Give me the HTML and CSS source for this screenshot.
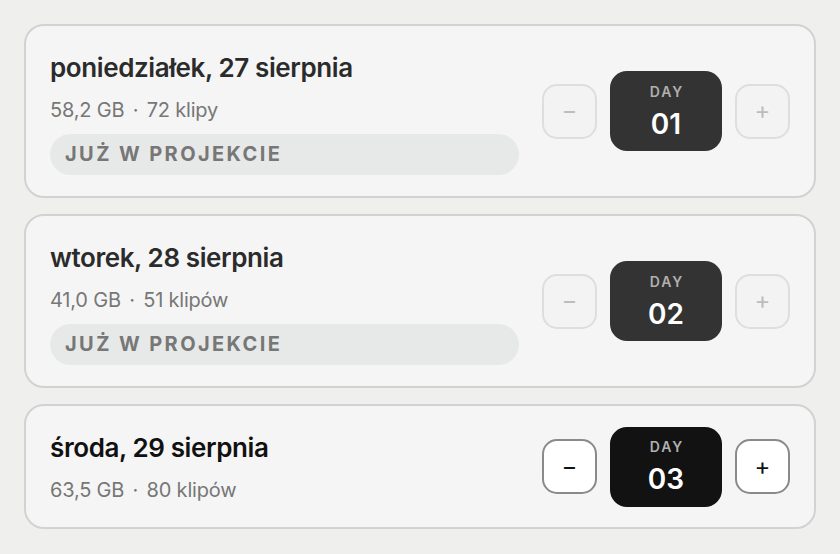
FILE: index.html
```html
<!DOCTYPE html>
<html lang="pl">
<head>
<meta charset="utf-8">
<link rel="stylesheet" href="styles.css">
</head>
<body>
<div class="list">
  <div class="card">
    <div class="info">
      <div class="title">poniedziałek, 27 sierpnia</div>
      <div class="meta">58,2 GB <span class="dot">·</span> 72 klipy</div>
      <div class="badge">JUŻ W PROJEKCIE</div>
    </div>
    <div class="controls">
      <div class="btn disabled">−</div>
      <div class="day muted"><span class="day-label">DAY</span><span class="day-num">01</span></div>
      <div class="btn disabled">+</div>
    </div>
  </div>
  <div class="card">
    <div class="info">
      <div class="title">wtorek, 28 sierpnia</div>
      <div class="meta">41,0 GB <span class="dot">·</span> 51 klipów</div>
      <div class="badge">JUŻ W PROJEKCIE</div>
    </div>
    <div class="controls">
      <div class="btn disabled">−</div>
      <div class="day muted"><span class="day-label">DAY</span><span class="day-num">02</span></div>
      <div class="btn disabled">+</div>
    </div>
  </div>
  <div class="card">
    <div class="info plain">
      <div class="title active">środa, 29 sierpnia</div>
      <div class="meta">63,5 GB <span class="dot">·</span> 80 klipów</div>
    </div>
    <div class="controls">
      <div class="btn">−</div>
      <div class="day"><span class="day-label">DAY</span><span class="day-num">03</span></div>
      <div class="btn">+</div>
    </div>
  </div>
</div>
</body>
</html>
```
FILE: styles.css
```css
* { box-sizing: border-box; }
html, body { margin: 0; padding: 0; }
body {
  background: #efefee;
  font-family: Inter, "Noto Sans", sans-serif;
  width: 840px;
  height: 554px;
}
.list {
  padding: 24px 24px 0 24px;
  display: flex;
  flex-direction: column;
  gap: 16px;
}
.card {
  background: #f5f5f5;
  border: 2px solid #d2d2d2;
  border-radius: 20px;
  display: flex;
  align-items: center;
  justify-content: space-between;
  padding: 0 24px 0 24px;
}
.info {
  padding: 26px 0 21px 0;
  width: 469px;
}
.info.plain { padding-bottom: 25px; }
.title {
  font-size: 26px;
  font-weight: 600;
  color: #2b2b2b;
  letter-spacing: -0.4px;
  line-height: 32px;
}
.title.active { color: #111; }
.meta {
  margin-top: 14px;
  font-size: 20px;
  color: #777;
  line-height: 24px;
  letter-spacing: -0.2px;
}
.dot { margin: 0 3px; }
.badge {
  margin-top: 12px;
  height: 41px;
  border-radius: 21px;
  background: #e7e9e8;
  color: #767776;
  font-weight: 700;
  font-size: 20px;
  letter-spacing: 2.4px;
  line-height: 41px;
  padding-left: 15px;
}
.controls {
  display: flex;
  align-items: center;
  gap: 13px;
}
.btn {
  width: 55px;
  height: 55px;
  border-radius: 15px;
  border: 2px solid #8a8a8a;
  background: #fff;
  color: #111;
  font-size: 24px;
  display: flex;
  align-items: center;
  justify-content: center;
  line-height: 1;
}
.btn.disabled {
  border-color: #dedede;
  background: #f3f3f3;
  color: #bdbdbd;
}
.day {
  width: 112px;
  height: 80px;
  border-radius: 17px;
  background: #121212;
  display: flex;
  flex-direction: column;
  align-items: center;
  justify-content: center;
}
.day.muted { background: #333; }
.day-label {
  font-size: 14px;
  font-weight: 600;
  letter-spacing: 2px;
  color: #b0b0b0;
  line-height: 18px;
  margin-left: 2px;
}
.day-num {
  font-size: 28px;
  font-weight: 600;
  color: #fff;
  line-height: 32px;
  margin-top: 7px;
}
```
